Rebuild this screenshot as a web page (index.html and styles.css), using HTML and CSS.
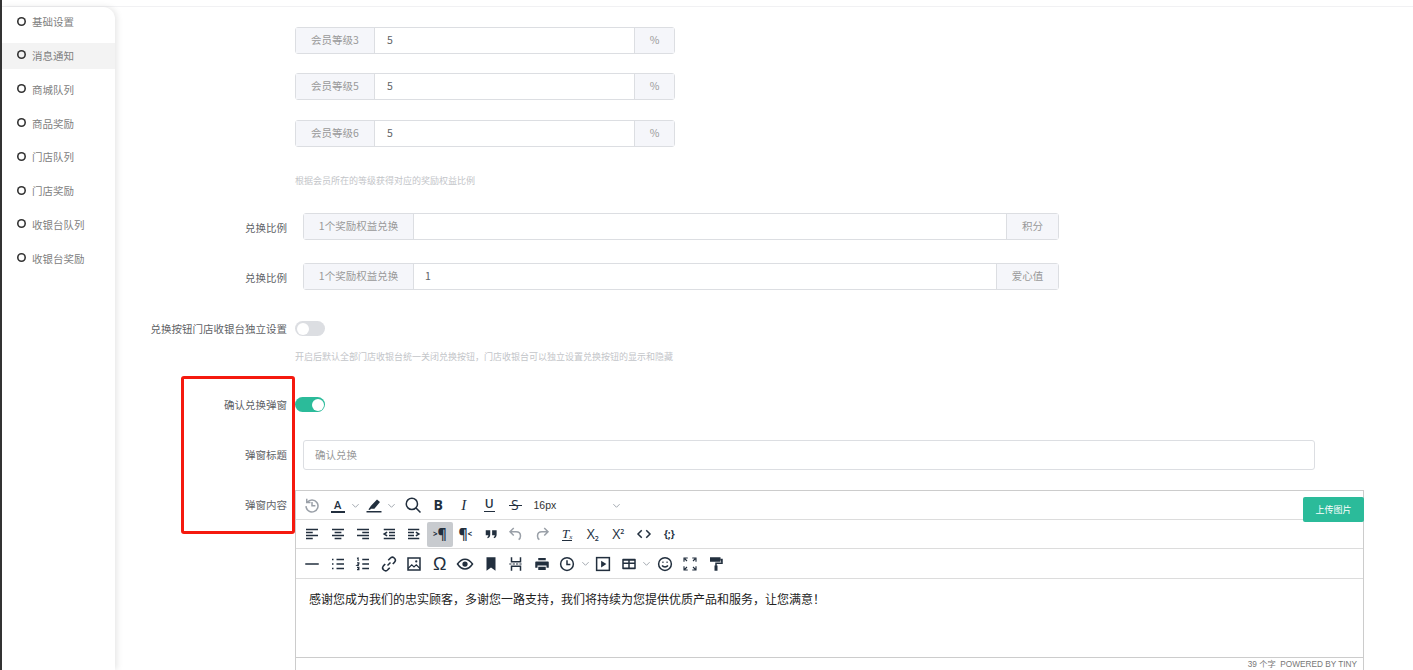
FILE: index.html
```html
<!DOCTYPE html>
<html lang="en">
<head>
    <meta charset="UTF-8">
    <meta name="viewport" content="width=device-width, initial-scale=1.0">
    <title>消息通知</title>
    <link rel="stylesheet" href="styles.css">
</head>
<body>
    <div class="topbar"></div>
    <div class="page">
        <aside class="sidebar">
            <a class="side-item"><i></i>基础设置</a>
            <a class="side-item active"><i></i>消息通知</a>
            <a class="side-item"><i></i>商城队列</a>
            <a class="side-item"><i></i>商品奖励</a>
            <a class="side-item"><i></i>门店队列</a>
            <a class="side-item"><i></i>门店奖励</a>
            <a class="side-item"><i></i>收银台队列</a>
            <a class="side-item"><i></i>收银台奖励</a>
        </aside>
        <main class="main">
            <div class="row first">
                <div class="group small">
                    <span class="addon prefix">会员等级3</span>
                    <span class="value">5</span>
                    <span class="addon suffix">%</span>
                </div>
            </div>
            <div class="row tier">
                <div class="group small">
                    <span class="addon prefix">会员等级5</span>
                    <span class="value">5</span>
                    <span class="addon suffix">%</span>
                </div>
            </div>
            <div class="row tier">
                <div class="group small">
                    <span class="addon prefix">会员等级6</span>
                    <span class="value">5</span>
                    <span class="addon suffix">%</span>
                </div>
            </div>
            <p class="help help-tier">根据会员所在的等级获得对应的奖励权益比例</p>

            <div class="row rate-one">
                <label>兑换比例</label>
                <div class="group wide">
                    <span class="addon prefix">1个奖励权益兑换</span>
                    <span class="value"></span>
                    <span class="addon suffix">积分</span>
                </div>
            </div>
            <div class="row rate-two">
                <label>兑换比例</label>
                <div class="group wide">
                    <span class="addon prefix">1个奖励权益兑换</span>
                    <span class="value">1</span>
                    <span class="addon suffix love">爱心值</span>
                </div>
            </div>

            <div class="row switch-one">
                <label>兑换按钮门店收银台独立设置</label>
                <span class="switch"></span>
            </div>
            <p class="help help-switch">开启后默认全部门店收银台统一关闭兑换按钮，门店收银台可以独立设置兑换按钮的显示和隐藏</p>

            <div class="row switch-two">
                <label>确认兑换弹窗</label>
                <span class="switch on"></span>
            </div>
            <div class="row title-row">
                <label>弹窗标题</label>
                <div class="text-input">确认兑换</div>
            </div>
            <div class="row editor-row">
                <label>弹窗内容</label>
                <div class="editor">
                    <div class="toolbar">
                        <span class="btn muted"><svg viewBox="0 0 24 24"><path d="M5.6 8.500A8 8 0 1 1 4 13.500M5 3.500v5h5M12 8v5h4.500"/></svg></span>
                        <span class="btn"><span class="fore">A</span></span><span class="chev"><svg viewBox="0 0 10 10"><path d="M1.500 3.500L5 7l3.500-3.500"/></svg></span>
                        <span class="btn"><svg viewBox="0 0 24 24"><path class="fill" d="M8 13l8-8.500 4 3.500-7.500 9H8l-1.500 1.500-2-.5z"/><path d="M2 21h20"/></svg></span><span class="chev"><svg viewBox="0 0 10 10"><path d="M1.500 3.500L5 7l3.500-3.500"/></svg></span>
                        <span class="btn search"><svg viewBox="0 0 24 24"><circle cx="10.500" cy="10.500" r="7.500"/><path d="M16 16l6 6"/></svg></span>
                        <span class="btn glyph bold">B</span>
                        <span class="btn glyph italic">I</span>
                        <span class="btn glyph under">U</span>
                        <span class="btn glyph strike">S</span>
                        <span class="size">16px<svg viewBox="0 0 10 10"><path d="M1.500 3.500L5 7l3.500-3.500"/></svg></span>
                    </div>
                    <div class="toolbar">
                        <span class="btn"><svg viewBox="0 0 24 24"><path d="M4 6h16M4 10h9M4 14h16M4 18h9"/></svg></span>
                        <span class="btn"><svg viewBox="0 0 24 24"><path d="M4 6h16M7.500 10h9M4 14h16M7.500 18h9"/></svg></span>
                        <span class="btn"><svg viewBox="0 0 24 24"><path d="M4 6h16M11 10h9M4 14h16M11 18h9"/></svg></span>
                        <span class="btn"><svg viewBox="0 0 24 24"><path d="M5 6h15M12 10h8M12 14h8M5 18h15M9.500 9.500L5.500 12l4 2.500"/></svg></span>
                        <span class="btn"><svg viewBox="0 0 24 24"><path d="M4 6h15M4 10h8M4 14h8M4 18h15M14.500 9.500l4 2.500-4 2.500"/></svg></span>
                        <span class="btn glyph para active"><small>&gt;</small>¶</span>
                        <span class="btn glyph para">¶<small>&lt;</small></span>
                        <span class="btn"><svg viewBox="0 0 24 24"><path class="fill" d="M5 7h6v5.500c0 2.500-1.200 4.500-3.500 5L7 16c1-.4 1.400-1.200 1.500-2.500H5zM13.500 7h6v5.500c0 2.500-1.200 4.500-3.500 5L15.500 16c1-.4 1.400-1.200 1.500-2.500h-3.500z"/></svg></span>
                        <span class="btn muted"><svg viewBox="0 0 24 24"><path d="M9 4L4 9l5 5M4 9h8c4 0 6 2.500 6 5.500 0 2-1 4-2.500 5"/></svg></span>
                        <span class="btn muted"><svg viewBox="0 0 24 24"><path d="M15 4l5 5-5 5M20 9h-8c-4 0-6 2.500-6 5.500 0 2 1 4 2.500 5"/></svg></span>
                        <span class="btn glyph clear"><span>T<sub>x</sub></span></span>
                        <span class="btn glyph script"><span>X<sub>2</sub></span></span>
                        <span class="btn glyph script"><span>X<sup>2</sup></span></span>
                        <span class="btn"><svg viewBox="0 0 24 24"><path d="M9 7l-5 5 5 5M15 7l5 5-5 5"/></svg></span>
                        <span class="btn glyph sample">{;}</span>
                    </div>
                    <div class="toolbar last">
                        <span class="btn"><svg viewBox="0 0 24 24"><path d="M3 12h18"/></svg></span>
                        <span class="btn"><svg viewBox="0 0 24 24"><path d="M10 6h10M10 12h10M10 18h10M4 6h2M4 12h2M4 18h2"/></svg></span>
                        <span class="btn"><svg viewBox="0 0 24 24"><path d="M11 6h9M11 12h9M11 18h9"/><path class="thin" d="M4 4.500L5.500 4v4M4 10.500h2.500V12L4 14h2.500M4 16.500h2.500V18H5h1.500v1.500H4"/></svg></span>
                        <span class="btn"><svg viewBox="0 0 24 24"><path d="M10 14l4-4M11 7l2.500-2.500a3.500 3.500 0 0 1 6 5L17 12M13 17l-2.500 2.500a3.500 3.500 0 0 1-6-5L7 12"/></svg></span>
                        <span class="btn"><svg viewBox="0 0 24 24"><rect x="4" y="4" width="16" height="16"/><path class="thin" d="M4 18l5-5 3 3 3-3 5 5"/><circle class="fill" cx="15" cy="8.500" r="1.500"/></svg></span>
                        <span class="btn glyph omega">Ω</span>
                        <span class="btn"><svg viewBox="0 0 24 24"><path d="M2 12c3-4.500 6.200-6.500 10-6.500s7 2 10 6.500c-3 4.500-6.200 6.500-10 6.500S5 16.500 2 12z"/><circle class="fill" cx="12" cy="12" r="3.500"/></svg></span>
                        <span class="btn"><svg viewBox="0 0 24 24"><path class="fill" d="M6 3h12v18l-6-4.500L6 21z"/></svg></span>
                        <span class="btn"><svg viewBox="0 0 24 24"><path d="M6 3v6h12V3M6 21v-6h12v6"/><path class="thin" d="M3 12h18" stroke-dasharray="3 1.500"/></svg></span>
                        <span class="btn"><svg viewBox="0 0 24 24"><path class="fill" d="M7 4h10v3H7zM4 8.500h16a1 1 0 0 1 1 1V17h-3v-3H6v3H3V9.500a1 1 0 0 1 1-1zM7 15.500h10V20H7z"/></svg></span>
                        <span class="btn"><svg viewBox="0 0 24 24"><circle cx="12" cy="12" r="8.500"/><path d="M12 7v5.500h4.500"/></svg></span><span class="chev"><svg viewBox="0 0 10 10"><path d="M1.500 3.500L5 7l3.500-3.500"/></svg></span>
                        <span class="btn"><svg viewBox="0 0 24 24"><rect x="3.500" y="3.500" width="17" height="17"/><path class="fill" d="M9.500 7.500l7 4.500-7 4.500z"/></svg></span>
                        <span class="btn"><svg viewBox="0 0 24 24"><path class="fill" d="M4 5h16a1 1 0 0 1 1 1v12a1 1 0 0 1-1 1H4a1 1 0 0 1-1-1V6a1 1 0 0 1 1-1zm1 5h6V7.500H5zm8 0h6V7.500h-6zm-8 6.500h6V12H5zm8 0h6V12h-6z"/></svg></span><span class="chev"><svg viewBox="0 0 10 10"><path d="M1.500 3.500L5 7l3.500-3.500"/></svg></span>
                        <span class="btn"><svg viewBox="0 0 24 24"><circle cx="12" cy="12" r="8.500"/><path d="M8 14c2 2.500 6 2.500 8 0M8.500 9.500h1.500M14 9.500h1.500"/></svg></span>
                        <span class="btn"><svg viewBox="0 0 24 24"><path class="thin" d="M4 9V4h5M20 9V4h-5M4 15v5h5M20 15v5h-5M5 5l3 3M19 5l-3 3M5 19l3-3M19 19l-3-3"/></svg></span>
                        <span class="btn"><svg viewBox="0 0 24 24"><path class="fill" d="M4 3h14v6H4zM18 5h3v7h-8v3h-2v-5h8z"/><path class="fill" d="M10 14h4v7h-4z"/></svg></span>
                    </div>
                    <div class="content">感谢您成为我们的忠实顾客，多谢您一路支持，我们将持续为您提供优质产品和服务，让您满意！</div>
                    <div class="status">39 个字&nbsp; POWERED BY TINY</div>
                    <button class="upload" type="button">上传图片</button>
                </div>
            </div>
        </main>
    </div>
    <div class="mark"></div>
</body>
</html>
```

FILE: styles.css
```css
html, body {
    height: 670px;
    overflow: hidden;
}
body {
    margin: 0;
    position: relative;
    background: #fff;
    font-family: "Noto Sans CJK SC", "Liberation Sans", sans-serif;
    font-size: 10.5px;
    color: #606266;
    border-left: 2px solid #333;
    box-sizing: border-box;
}
.topbar {
    height: 6px;
    border-bottom: 1px solid #f1f1f3;
}
.page {
    display: flex;
    height: 663px;
}
.sidebar {
    width: 113px;
    flex-shrink: 0;
    border-top-right-radius: 12px;
    box-shadow: 2px 0 6px rgba(0, 0, 0, 0.1);
    background: #fff;
    box-sizing: border-box;
    padding-top: 2.2px;
}
.side-item {
    display: flex;
    align-items: center;
    height: 26px;
    margin-bottom: 7.8px;
    padding-left: 15px;
    color: #808080;
    line-height: 26px;
}
.side-item i {
    width: 9px;
    height: 9px;
    box-shadow: inset 0 0 0 1.6px #333;
    border-radius: 50%;
    margin-right: 6px;
    margin-top: -2px;
}
.side-item.active {
    background: #f3f3f3;
}
.main {
    flex: 1;
    min-width: 0;
    overflow: hidden;
}
.row {
    display: flex;
    align-items: center;
    padding-left: 180px;
    position: relative;
}
.row label {
    position: absolute;
    right: 100%;
    margin-right: -172px;
    white-space: nowrap;
    color: #606266;
}
.first { margin-top: 19.8px; }
.tier { margin-top: 19.5px; }
.rate-one { margin-top: 25px; }
.rate-two { margin-top: 23px; }
.switch-one { margin-top: 25px; height: 27px; }
.switch-two { margin-top: 27px; height: 27px; }
.title-row { margin-top: 22px; }
.editor-row { margin-top: 20px; align-items: flex-start; }
.rate-one label, .rate-two label { margin-top: 2px; }
.title-row label { margin-top: -2px; }
.help {
    margin: 27.500px 0 0 180px;
    height: 14px;
    line-height: 14px;
    font-size: 9px;
    color: #c3c5c9;
}
.help-switch { margin-top: 8px; }
.group {
    display: flex;
    height: 27px;
    box-sizing: border-box;
    border: 1px solid #dcdee2;
    border-radius: 3px;
    line-height: 24px;
}
.group.small { width: 380px; }
.group.wide { width: 756px; margin-left: 8px; }
.addon {
    background: #f5f6fa;
    color: #999;
    text-align: center;
}
.small .prefix { width: 78px; }
.small .suffix { width: 39px; }
.wide .prefix { width: 109px; }
.wide .suffix { width: 51px; }
.wide .suffix.love { width: 61px; }
.prefix { border-right: 1px solid #dcdee2; }
.suffix { border-left: 1px solid #dcdee2; }
.value {
    flex: 1;
    padding-left: 12px;
    color: #606266;
}
.wide .value { padding-left: 11px; }
.switch {
    width: 30px;
    height: 15px;
    border-radius: 8px;
    background: #dcdee2;
    position: relative;
}
.switch::after {
    content: "";
    position: absolute;
    left: 1.5px;
    top: 1.5px;
    width: 12px;
    height: 12px;
    border-radius: 50%;
    background: #fff;
}
.switch.on {
    background: #2bbb9a;
}
.switch.on::after {
    left: 16.500px;
}
.text-input {
    width: 1012px;
    height: 30px;
    margin-left: 8px;
    box-sizing: border-box;
    border: 1px solid #dcdee2;
    border-radius: 3px;
    padding-left: 11px;
    line-height: 28px;
    color: #999;
}
.editor {
    width: 1069px;
    height: 180px;
    box-sizing: border-box;
    border: 1px solid #ccc;
    border-bottom: none;
    position: relative;
}
.editor-row label {
    top: 7px;
}
.toolbar {
    display: flex;
    align-items: center;
    height: 29px;
    box-sizing: border-box;
    padding-left: 3.500px;
    border-bottom: 1px solid #dcdcdc;
    color: #222f3e;
}
.toolbar.last {
    height: 30px;
}
.btn {
    display: flex;
    align-items: center;
    justify-content: center;
    width: 25.500px;
    height: 25px;
    flex-shrink: 0;
    border-radius: 2px;
    position: relative;
}
.btn.search {
    margin-left: 3px;
}
.btn.muted {
    color: #9aa0a8;
}
.btn.active {
    background: #c8cbcf;
}
.btn svg {
    width: 18px;
    height: 18px;
}
svg {
    fill: none;
    stroke: currentColor;
    stroke-width: 2;
}
svg .fill {
    fill: currentColor;
    stroke: none;
}
svg .thin {
    stroke-width: 1.500;
}
.chev {
    display: flex;
    align-items: center;
    justify-content: center;
    width: 10.500px;
    color: #9aa0a8;
}
.chev svg, .size svg {
    width: 9px;
    height: 9px;
    stroke-width: 1;
}
.fore {
    display: block;
    width: 14px;
    text-align: center;
    font-family: "Open Sans", sans-serif;
    font-size: 11px;
    font-weight: 600;
    line-height: 13px;
    border-bottom: 2px solid #222f3e;
}
.glyph {
    font-family: "Open Sans", sans-serif;
    font-size: 13px;
    line-height: 1;
}
.bold { font-weight: 700; font-size: 14px; }
.italic { font-style: italic; font-family: "Liberation Serif", serif; font-size: 15px; }
.under { font-size: 12px; font-weight: 600; padding-bottom: 3px; box-sizing: border-box; }
.under::after, .strike::after {
    content: "";
    position: absolute;
    left: 6.500px;
    width: 13px;
    height: 1.500px;
    background: #222f3e;
}
.under::after { top: 18px; width: 11px; left: 7.500px; }
.strike { font-size: 14px; }
.strike::after { top: 12px; }
.para { font-weight: 700; font-size: 14px; }
.para small { font-size: 8px; }
.clear { font-style: italic; font-family: "Liberation Serif", serif; font-size: 13px; }
.clear span { display: block; line-height: 12px; border-bottom: 1.500px solid #222f3e; }
.clear sub { font-size: 7px; line-height: 0; vertical-align: -1px; }
.script { font-size: 14px; }
.script sub, .script sup { font-size: 7px; font-weight: 600; line-height: 0; }
.script sub { vertical-align: -2px; }
.script sup { vertical-align: 5px; }
.sample { font-size: 10px; font-weight: 700; }
.omega { font-size: 18px; font-family: "Liberation Sans", sans-serif; }
.size {
    display: flex;
    align-items: center;
    justify-content: space-between;
    width: 87px;
    margin-left: 6px;
    color: #333;
    font-family: "Liberation Sans", sans-serif;
    font-size: 10.500px;
}
.size svg {
    color: #9aa0a8;
}
.content {
    height: 79px;
    padding: 12px 13px 0;
    box-sizing: border-box;
    border-bottom: 1px solid #ccc;
    font-size: 12px;
    line-height: 16px;
    color: #222;
}
.status {
    text-align: right;
    padding-right: 6px;
    font-family: "Liberation Sans", "Noto Sans CJK SC", sans-serif;
    font-size: 8.250px;
    line-height: 14px;
    color: #777;
}
.upload {
    position: absolute;
    right: -1px;
    top: 6px;
    width: 61px;
    height: 25px;
    border: none;
    border-radius: 2px;
    background: #2bbb9a;
    color: #fff;
    font-family: inherit;
    font-size: 9px;
}
.mark {
    position: absolute;
    left: 179px;
    top: 376px;
    width: 114px;
    height: 158px;
    box-sizing: border-box;
    border: 3px solid #f5190f;
    border-radius: 3px;
}
```
